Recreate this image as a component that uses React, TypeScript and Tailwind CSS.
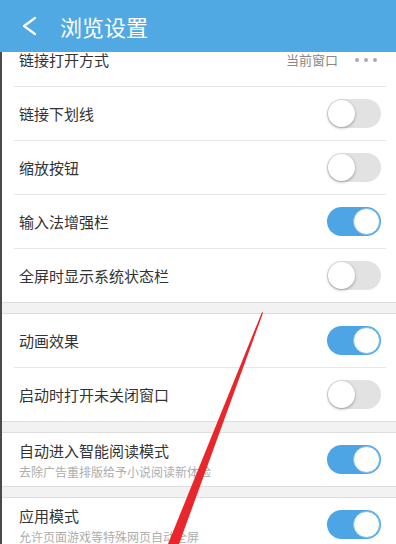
type Item = {
  title: string;
  sub?: string;
  on: boolean;
};

const sections: Item[][] = [
  [
    { title: '链接下划线', on: false },
    { title: '缩放按钮', on: false },
    { title: '输入法增强栏', on: true },
    { title: '全屏时显示系统状态栏', on: false },
  ],
  [
    { title: '动画效果', on: true },
    { title: '启动时打开未关闭窗口', on: false },
  ],
  [{ title: '自动进入智能阅读模式', sub: '去除广告重排版给予小说阅读新体验', on: true }],
  [{ title: '应用模式', sub: '允许页面游戏等特殊网页自动全屏', on: true }],
];

const Toggle = ({ on }: { on: boolean }) => (
  <div
    className={`relative w-[54px] h-[29px] rounded-full shrink-0 ${
      on ? 'bg-[#4ea5e5]' : 'bg-[#e2e2e2]'
    }`}
  >
    <div
      className={`absolute top-[1px] w-[27px] h-[27px] rounded-full bg-white ${
        on
          ? 'right-[1px] border border-[#7dbdea]'
          : 'left-[1px] shadow-[0_1px_3px_rgba(0,0,0,0.35)]'
      }`}
    />
  </div>
);

const Divider = () => <div className="h-px ml-[12px] mr-[10px] bg-[#e8e8e8]" />;

const Band = () => (
  <div className="h-[12px] bg-[#f2f2f2] border-y border-[#dedede]" />
);

const Row = ({ item }: { item: Item }) => (
  <div className="h-[53px] flex items-center justify-between pl-[17px] pr-[15px]">
    {item.sub ? (
      <div className="flex flex-col pt-[2px]">
        <span className="text-[15px] leading-[20px] text-[#333]">{item.title}</span>
        <span className="text-[12px] leading-[18px] mt-[2px] text-[#adadad]">{item.sub}</span>
      </div>
    ) : (
      <span className="text-[15px] leading-[20px] text-[#333]">{item.title}</span>
    )}
    <Toggle on={item.on} />
  </div>
);

export default function App() {
  return (
    <div
      className="relative w-[396px] h-[544px] overflow-hidden bg-white"
      style={{ fontFamily: '"Noto Sans CJK SC", "Noto Sans", sans-serif' }}
    >
      <div className="relative z-10 h-[52px] bg-[#51a9e3] flex items-center">
        <svg className="ml-[22px]" width="15" height="20" viewBox="0 0 15 20">
          <polyline
            points="13,2 2,10 13,18"
            fill="none"
            stroke="white"
            strokeWidth="2.2"
            strokeLinecap="round"
            strokeLinejoin="round"
          />
        </svg>
        <span className="ml-[23px] text-[22px] text-white">浏览设置</span>
      </div>

      <div className="border-l-2 border-[#4a4a4a] -mt-[19px]">
        {/* scrolled partly under the header */}
        <div className="h-[53px] flex items-center justify-between pl-[17px] pr-[19px]">
          <span className="text-[15px] leading-[20px] text-[#333]">链接打开方式</span>
          <div className="flex items-center">
            <span className="text-[13px] text-[#888]">当前窗口</span>
            <span className="ml-[17px] flex gap-[5px]">
              <span className="w-[4px] h-[4px] rounded-full bg-[#aaa]" />
              <span className="w-[4px] h-[4px] rounded-full bg-[#aaa]" />
              <span className="w-[4px] h-[4px] rounded-full bg-[#aaa]" />
            </span>
          </div>
        </div>
        <Divider />

        {sections.map((sec, si) => (
          <div key={si}>
            {si > 0 && <Band />}
            {sec.map((item, i) => (
              <div key={item.title}>
                {i > 0 && <Divider />}
                <Row item={item} />
              </div>
            ))}
          </div>
        ))}
      </div>

      <svg className="absolute inset-0 pointer-events-none" width="396" height="544">
        <polygon points="262,312 263,313 179,544 168,544" fill="#e8262b" />
      </svg>
    </div>
  );
}
